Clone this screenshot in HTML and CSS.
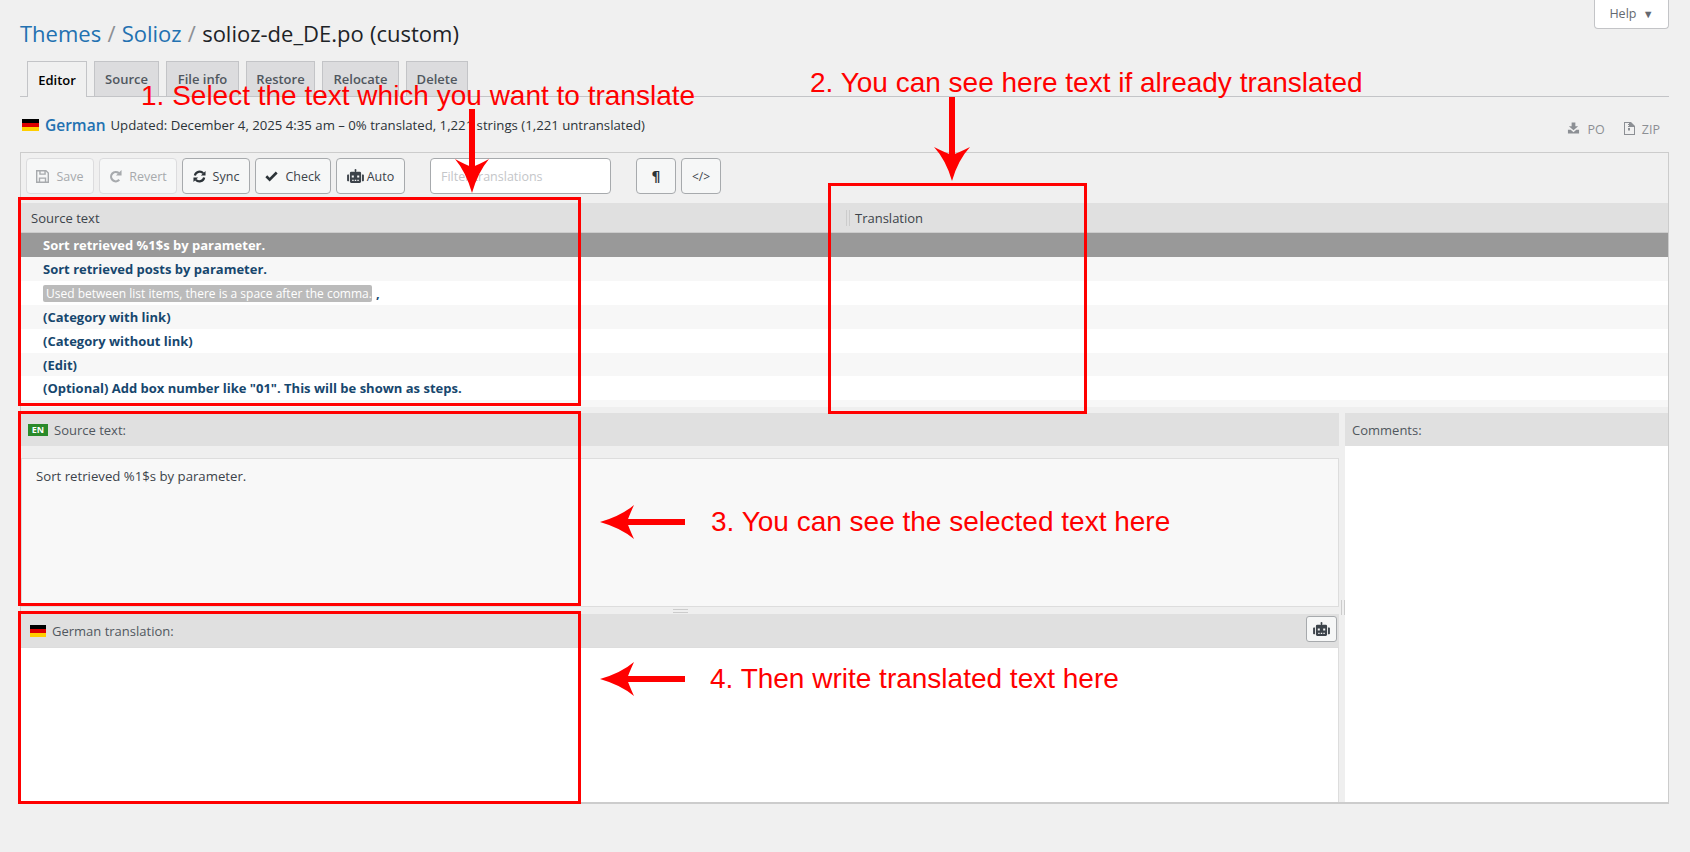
FILE: index.html
```html
<!DOCTYPE html>
<html lang="en">
<head>
<meta charset="utf-8">
<title>solioz-de_DE.po (custom)</title>
<link rel="stylesheet" href="styles.css">
</head>
<body>
<div class="page">
  <header class="head">
    <h1 class="title"><a href="#">Themes</a> <span class="sep">/</span> <a href="#">Solioz</a> <span class="sep">/</span> solioz-de_DE.po (custom)</h1>
    <button class="help">Help <span class="help-caret">▼</span></button>
  </header>

  <nav class="tabs">
    <a class="tab tab-active" href="#">Editor</a>
    <a class="tab" href="#">Source</a>
    <a class="tab" href="#">File info</a>
    <a class="tab" href="#">Restore</a>
    <a class="tab" href="#">Relocate</a>
    <a class="tab" href="#">Delete</a>
  </nav>

  <div class="meta">
    <div class="meta-left">
      <span class="flag"></span>
      <a class="lang" href="#">German</a>
      <span class="meta-text">Updated: December 4, 2025 4:35 am – 0% translated, 1,221 strings (1,221 untranslated)</span>
    </div>
    <div class="meta-right">
      <a class="dl" href="#">
        <svg class="dl-icon" viewBox="0 0 14 12"><path d="M5 0h4v4h3L7 8.500 2 4h3zM1 8h3l3 2.500L10 8h3v4H1z"/></svg>
        PO
      </a>
      <a class="dl" href="#">
        <svg class="dl-icon dl-zip" viewBox="0 0 11 13"><path fill-rule="evenodd" d="M0 0h7l4 4v9H0zM1 1v11h9V5H6V1H5v1H4v1h1v1H4v1h1v1H4v2.500h2V6H5V5h1V1z"/></svg>
        ZIP
      </a>
    </div>
  </div>

  <section class="editor">
    <div class="toolbar">
      <button class="btn btn-off btn-save">
        <svg class="ico" viewBox="0 0 14 14"><path fill-rule="evenodd" d="M0 0h11l3 3v11H0zM1.500 1.500v11h1.500V8h8v4.500h1.500V3.600L10.500 1.500V5h-7V1.500zM5 1.500V3.700h4V1.500zM4.500 9.300v3.200h5V9.300z"/></svg>
        Save
      </button>
      <button class="btn btn-off btn-revert">
        <svg class="ico" viewBox="0 0 14 14"><path class="ring" d="M11 10.500a5 5 0 1 1-.4-7.100"/><path d="M13.500 0v6h-6z"/></svg>
        Revert
      </button>
      <button class="btn btn-sync">
        <svg class="ico" viewBox="0 0 14 14"><path class="ring" d="M2 6a5.200 5.200 0 0 1 9-2.500M12 8a5.200 5.200 0 0 1-9 2.500"/><path d="M13.500 1v5h-5zM.5 13V8h5z"/></svg>
        Sync
      </button>
      <button class="btn btn-check">
        <svg class="ico" viewBox="0 0 14 14"><path d="M5 12.300 .4 7.700l2-2L5 8.300l6.600-6.600 2 2z"/></svg>
        Check
      </button>
      <button class="btn btn-auto">
        <svg class="ico-robot" viewBox="0 0 18 15"><circle cx="9" cy="1" r="1"/><path fill-rule="evenodd" d="M8.300 1h1.400v2h3.800A1.500 1.500 0 0 1 15 4.500V13.500A1.500 1.500 0 0 1 13.500 15h-9A1.500 1.500 0 0 1 3 13.500V4.500A1.500 1.500 0 0 1 4.500 3H8.300zM5 7v2.200h2.200V7zM10.800 7v2.200H13V7zM5.500 11.500v1.300h1.500v-1.300zM8.200 11.500v1.300h1.600v-1.300zM11 11.500v1.300h1.500v-1.300z"/><path d="M.8 6H2v7H.8A.8.8 0 0 1 0 12.200V6.800A.8.8 0 0 1 .8 6zM16 6h1.200a.8.800 0 0 1 .8.800v5.400a.8.800 0 0 1-.8.800H16z"/></svg>
        Auto
      </button>
      <input class="filter" type="text" placeholder="Filter translations">
      <button class="btn btn-square btn-para">¶</button>
      <button class="btn btn-square btn-code">&lt;/&gt;</button>
    </div>

    <div class="grid-head">
      <div class="col-source">Source text</div>
      <div class="col-trans">Translation</div>
    </div>
    <div class="rows">
      <div class="row row-selected">Sort retrieved %1$s by parameter.</div>
      <div class="row">Sort retrieved posts by parameter.</div>
      <div class="row"><span class="chip">Used between list items, there is a space after the comma.</span>,</div>
      <div class="row">(Category with link)</div>
      <div class="row">(Category without link)</div>
      <div class="row">(Edit)</div>
      <div class="row">(Optional) Add box number like "01". This will be shown as steps.</div>
      <div class="row"></div>
    </div>

    <div class="panes">
      <div class="pane-main">
        <div class="pane-head"><span class="en-badge">EN</span>Source text:</div>
        <div class="source-box">Sort retrieved %1$s by parameter.</div>
        <div class="split-h"><span class="grip-h"></span></div>
        <div class="pane-head pane-head-tr">
          <span class="flag flag-small"></span>German translation:
          <button class="btn-robot">
            <svg class="ico-robot" viewBox="0 0 18 15"><circle cx="9" cy="1" r="1"/><path fill-rule="evenodd" d="M8.300 1h1.400v2h3.800A1.500 1.500 0 0 1 15 4.500V13.500A1.500 1.500 0 0 1 13.500 15h-9A1.500 1.500 0 0 1 3 13.500V4.500A1.500 1.500 0 0 1 4.500 3H8.300zM5 7v2.200h2.200V7zM10.800 7v2.200H13V7zM5.500 11.500v1.300h1.500v-1.300zM8.200 11.500v1.300h1.600v-1.300zM11 11.500v1.300h1.500v-1.300z"/><path d="M.8 6H2v7H.8A.8.8 0 0 1 0 12.200V6.800A.8.8 0 0 1 .8 6zM16 6h1.200a.8.800 0 0 1 .8.800v5.400a.8.800 0 0 1-.8.800H16z"/></svg>
          </button>
        </div>
        <div class="target-box"></div>
      </div>
      <div class="split-v"><span class="grip-v"></span></div>
      <div class="pane-side">
        <div class="pane-head">Comments:</div>
        <div class="comments"></div>
      </div>
    </div>
  </section>
</div>

<div class="notes">
  <div class="mark mark-1"></div>
  <div class="mark mark-2"></div>
  <div class="mark mark-3"></div>
  <div class="mark mark-4"></div>
  <p class="note note-1">1. Select the text which you want to translate</p>
  <p class="note note-2">2. You can see here text if already translated</p>
  <p class="note note-3">3. You can see the selected text here</p>
  <p class="note note-4">4. Then write translated text here</p>
  <svg class="arrows" viewBox="0 0 1690 852">
    <path d="M469 109h6v60h-6z"/>
    <path d="M472 193Q466 172 455 159Q466 165 472 167Q478 165 489 159Q478 172 472 193z"/>
    <path d="M949 97h6v60h-6z"/>
    <path d="M952 181Q946 160 934 147Q946 153 952 155Q958 153 970 147Q958 160 952 181z"/>
    <path d="M622 519h63v6h-63z"/>
    <path d="M600 522Q621 516 634 505Q629 516 627 522Q629 528 634 539Q621 528 600 522z"/>
    <path d="M622 676h63v6h-63z"/>
    <path d="M600 679Q621 673 634 662Q629 673 627 679Q629 685 634 696Q621 685 600 679z"/>
  </svg>
</div>
</body>
</html>
```
FILE: styles.css
```css
* { box-sizing: border-box; }
html, body { margin: 0; height: 100%; }
body {
  position: relative;
  height: 852px;
  overflow: hidden;
  background: #f0f0f0;
  font-family: "Open Sans", "Noto Sans", sans-serif;
  font-size: 12px;
  color: #3c434a;
}
a { color: #2271b1; text-decoration: none; }
button { font-family: inherit; }

.page { padding: 0 21px 0 20px; }

/* heading */
.head { display: flex; justify-content: space-between; align-items: flex-start; height: 61px; }
.title { margin: 20px 0 0; font-size: 22px; line-height: 26px; font-weight: 400; color: #1d2327; word-spacing: 0.500px; }
.title a { color: #2271b1; }
.sep { color: #8c8f94; }
.help {
  width: 75px; height: 29px; padding: 0 0 1px; background: #fff; color: #646970;
  border: 1px solid #c3c4c7; border-top: 0; border-radius: 0 0 4px 4px; font-size: 12.500px;
}
.help-caret { font-size: 11px; margin-left: 3px; }

/* tabs */
.tabs { display: flex; gap: 7px; height: 36px; padding-left: 7px; border-bottom: 1px solid #c3c4c7; }
.tab {
  display: flex; align-items: center; justify-content: center; height: 35px;
  background: #dcdcde; border: 1px solid #c3c4c7; border-bottom: 0;
  color: #50575e; font-size: 13px; font-weight: 600;
}
.tab:nth-child(1) { width: 60px; }
.tab:nth-child(2) { width: 65px; }
.tab:nth-child(3) { width: 73px; }
.tab:nth-child(4) { width: 69px; }
.tab:nth-child(5) { width: 77px; }
.tab:nth-child(6) { width: 62px; }
.tab-active { height: 36px; background: #f0f0f0; color: #000; }

/* meta */
.meta { display: flex; justify-content: space-between; height: 55px; }
.meta-left { display: flex; align-items: center; height: 56px; padding: 0 0 0 2px; }
.flag {
  display: block; width: 17px; height: 12px; margin-right: 6px; flex: none;
  background: linear-gradient(#000 33.300%, #d00 33.300% 66.600%, #ffce00 66.600%);
}
.lang { font-size: 15.500px; font-weight: 600; margin-right: 5px; }
.meta-text { font-size: 13.200px; color: #2c3338; }
.meta-right { display: flex; gap: 19px; padding: 25px 9px 0 0; color: #8c8f94; }
.dl { display: flex; align-items: flex-start; gap: 8px; color: #8c8f94; font-size: 12.500px; line-height: 16px; }
.dl-icon { width: 13px; height: 12px; fill: #8c8f94; }
.dl-zip { width: 11px; height: 13px; margin-right: -1px; }

/* editor */
.editor { border: 1px solid #ccc; border-bottom-width: 2px; height: 652px; }
.toolbar { display: flex; align-items: flex-start; height: 50px; padding: 5px; background: #f0f0f0; }
.btn {
  display: flex; align-items: center; justify-content: center; gap: 7px;
  height: 36px; padding: 0; margin-right: 5px;
  background: #f6f7f7; color: #3c434a; border: 1px solid #a7aaad; border-radius: 4px; font-size: 12.500px;
}
.btn-off { color: #a7aaad; border-color: #dcdcde; }
.btn-save { width: 68px; }
.btn-revert { width: 78px; }
.btn-sync { width: 68px; }
.btn-check { width: 76px; }
.btn-auto { width: 69px; gap: 3px; }
.btn-square { width: 40px; margin-right: 5px; }
.ico { width: 13px; height: 13px; fill: currentColor; }
.btn-sync .ico, .btn-check .ico { fill: #2c3338; }
.btn-off .ico { fill: #a7aaad; }
.ring { fill: none; stroke: currentColor; stroke-width: 2.400; }
.btn-sync .ring { stroke: #2c3338; }
.ico-robot { width: 17px; height: 14px; fill: #3c434a; }
.filter {
  width: 181px; height: 36px; margin: 0 25px 0 20px; padding: 0 10px;
  background: #fff; border: 1px solid #a7aaad; border-radius: 4px;
  font: 12.500px "Open Sans", sans-serif;
}
.filter::placeholder { color: #c4c6c9; opacity: 1; }
.btn-para { font: 700 14px "DejaVu Sans", sans-serif; color: #2c3338; }
.btn-code { font-size: 12px; }

/* grid */
.grid-head {
  display: flex; height: 30px; background: #e0e0e0; border-bottom: 1px solid #ccc;
  align-items: center; font-size: 13px; color: #3c434a;
}
.col-source { width: 825px; padding-left: 10px; }
.col-trans { flex: 1; padding-left: 5px; border-left: 4px double #ccc; height: 16px; line-height: 16px; }
.rows { height: 174px; overflow: hidden; }
.row {
  display: flex; align-items: center; gap: 4px;
  height: 24px; padding-left: 22px; background: #fff;
  color: #17476e; font-size: 13px; font-weight: 700; white-space: nowrap;
}
.row:nth-child(even) { background: #f7f7f7; }
.row:nth-child(6) { height: 23px; }
.rows .row-selected { background: #999; color: #fff; }
.chip {
  display: block; height: 17px; line-height: 17px; padding: 0 3px; width: 329px; overflow: hidden;
  background: #bbb; color: #fff; border-radius: 2px; font-size: 12px; font-weight: 400;
}

/* panes */
.panes { display: flex; height: 395px; padding-top: 6px; background: #efefef; }
.pane-main { display: flex; flex-direction: column; width: 1318px; }
.pane-side { display: flex; flex-direction: column; width: 323px; }
.pane-head {
  position: relative; display: flex; align-items: center; height: 33px; flex: none;
  padding-left: 7px; background: #e0e0e0; color: #50575e; font-size: 13px;
}
.en-badge {
  width: 20px; height: 12px; margin-right: 6px; background: #2a8a2a; color: #fff;
  font-size: 9px; font-weight: 700; line-height: 12px; text-align: center;
}
.source-box {
  height: 149px; margin-top: 12px; padding: 9px 14px; flex: none;
  background: #f8f8f8; border: 1px solid #ddd; color: #3c434a; font-size: 13.200px; line-height: 17px;
}
.split-h { display: flex; justify-content: center; height: 7px; flex: none; }
.grip-h { width: 15px; height: 4px; margin: 2px 0 0; border-top: 1px solid #ccc; border-bottom: 1px solid #ccc; }
.pane-head-tr { height: 34px; padding-left: 9px; border-bottom: 1px solid #ddd; }
.flag-small { width: 16px; }
.btn-robot {
  position: absolute; top: 2px; right: 2px; display: flex; align-items: center; justify-content: center;
  width: 31px; height: 26px; padding: 0; background: #f6f7f7; border: 1px solid #a7aaad; border-radius: 3px;
}
.target-box { flex: 1; background: #fff; border-right: 1px solid #ddd; }
.split-v { display: flex; align-items: flex-start; width: 6px; flex: none; }
.grip-v { width: 4px; height: 15px; margin: 187px 0 0 2px; border-left: 1px solid #ccc; border-right: 1px solid #ccc; }
.comments { flex: 1; background: #fff; }

/* annotations over the screenshot */
.notes { position: absolute; inset: 0; pointer-events: none; }
.mark { position: absolute; border: 3px solid #f00; }
.mark-1 { left: 18px; top: 197px; width: 563px; height: 209px; }
.mark-2 { left: 828px; top: 183px; width: 259px; height: 231px; }
.mark-3 { left: 18px; top: 411px; width: 563px; height: 195px; }
.mark-4 { left: 18px; top: 611px; width: 563px; height: 193px; }
.note {
  position: absolute; margin: 0; font: 28px/32px "Liberation Sans", sans-serif; color: #f00; white-space: nowrap;
}
.note-1 { left: 141px; top: 80px; }
.note-2 { left: 810px; top: 67px; }
.note-3 { left: 711px; top: 506px; }
.note-4 { left: 710px; top: 663px; }
.arrows { position: absolute; left: 0; top: 0; width: 1690px; height: 852px; fill: #f00; }
```
